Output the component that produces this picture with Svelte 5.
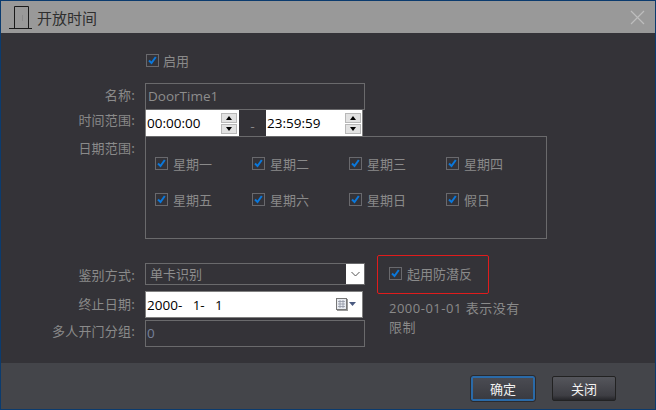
<script>
  const days = ['星期一','星期二','星期三','星期四','星期五','星期六','星期日','假日'];
</script>

{#snippet tick()}
  <span class="box"><svg width="11" height="11" viewBox="0 0 11 11"><path d="M2 5.500L4.500 8L8.800 2" fill="none" stroke="#0a78dc" stroke-width="2"/></svg></span>
{/snippet}

<div class="win">
  <header class="title">
    <svg class="door" width="24" height="24" viewBox="0 0 24 24">
      <path d="M0 22.500H23M5.500 22V0.500H19.500V22" fill="none" stroke="#1a1a1a" stroke-width="1"/>
      <path d="M13.500 9V15" stroke="#8a8a8a" stroke-width="1"/>
    </svg>
    <span>开放时间</span>
    <svg class="close" width="15" height="15" viewBox="0 0 15 15">
      <path d="M1 1L14 14M14 1L1 14" stroke="#bdbdbd" stroke-width="1.200"/>
    </svg>
  </header>

  <main class="body">
    <div class="row enable">
      <span class="lab"></span>
      <label class="chk solo">{@render tick()}启用</label>
    </div>

    <div class="row name">
      <span class="lab">名称:</span>
      <div class="input dark wide">DoorTime1</div>
    </div>

    <div class="row time">
      <span class="lab">时间范围:</span>
      <div class="spin first">
        <span>00:00:00</span>
        <span class="arrows"><i class="up"></i><i class="down"></i></span>
      </div>
      <span class="dash">-</span>
      <div class="spin second">
        <span>23:59:59</span>
        <span class="arrows"><i class="up"></i><i class="down"></i></span>
      </div>
    </div>

    <div class="row dates">
      <span class="lab">日期范围:</span>
      <div class="group">
        {#each days as d}
          <label class="chk">{@render tick()}{d}</label>
        {/each}
      </div>
    </div>

    <div class="lower">
      <div class="left">
        <div class="row sel">
          <span class="lab">鉴别方式:</span>
          <div class="input dark wide select">
            <span class="val">单卡识别</span>
            <span class="caret"><svg width="9" height="6" viewBox="0 0 9 6"><path d="M0.500 1L4.500 5L8.500 1" fill="none" stroke="#555" stroke-width="1"/></svg></span>
          </div>
        </div>
        <div class="row end">
          <span class="lab">终止日期:</span>
          <div class="datebox">
            <span class="dateval">2000-&nbsp;&nbsp;1-&nbsp;&nbsp;1</span>
            <svg width="21" height="13" viewBox="0 0 21 13">
              <rect x="1" y="1" width="11" height="12" fill="#9a9a9a"/>
              <rect x="0.500" y="0.500" width="10" height="11" fill="#e8ebf0" stroke="#777"/>
              <path d="M2 3.500H9M2 6H9M2 8.500H9M4 2V10M7 2V10" stroke="#8f96a3" stroke-width="0.800"/>
              <path d="M13 4H20L16.500 8Z" fill="#4a5a80"/>
            </svg>
          </div>
        </div>
        <div class="row multi">
          <span class="lab">多人开门分组:</span>
          <div class="input dark wide tall">0</div>
        </div>
      </div>
      <div class="right">
        <div class="redbox">
          <label class="chk">{@render tick()}起用防潜反</label>
        </div>
        <p class="note">2000-01-01 表示没有<br/>限制</p>
      </div>
    </div>
  </main>

  <footer class="foot">
    <button class="btn primary">确定</button>
    <button class="btn">关闭</button>
  </footer>
</div>

<style>
  :global(body) { margin: 0; background: #343338; }
  .win {
    width: 656px; height: 410px; box-sizing: border-box;
    border: 1px solid #0b3b6e;
    display: flex; flex-direction: column;
    background: #343338; overflow: hidden;
    font-family: "Noto Sans CJK SC", "Liberation Sans", sans-serif;
    font-size: 13px; color: #8a8a8a;
  }
  .title {
    height: 32px; flex: none; box-sizing: border-box; background: #999999; color: #2f2f2f;
    display: flex; align-items: center; padding: 0 10px 0 8px; font-size: 15px;
  }
  .door { margin-right: 4px; margin-top: 1px; }
  .close { margin-left: auto; }
  .body { flex: 1; padding-top: 17px; min-height: 0; }
  .row { display: flex; align-items: flex-start; }
  .lab {
    width: 134px; flex: none; text-align: right; line-height: 20px; margin-right: 10px; letter-spacing: 0.2px;
  }
  .chk { display: inline-flex; align-items: center; height: 20px; white-space: nowrap; }
  .box {
    width: 11px; height: 11px; border: 1px solid #69696d; margin-right: 5px;
    display: inline-flex; align-items: center; justify-content: center; flex: none;
  }
  .solo { margin-left: 1px; }
  .solo .box { margin-right: 4px; }
  .enable { height: 33px; box-sizing: border-box; }
  .input { box-sizing: border-box; border: 1px solid #6a6a6c; }
  .dark { background: #343338; color: #8d8d8d; }
  .wide { width: 220px; }
  .name { height: 27px; }
  .name .lab { line-height: 24px; }
  .name .input { height: 27px; line-height: 25px; padding-left: 2px; font-size: 13.5px; font-family: "Open Sans",sans-serif; }
  .time { height: 26px; }
  .time .lab { line-height: 20px; }
  .spin {
    box-sizing: border-box; height: 26px; background: #fff; color: #000;
    border-left: 1px solid #808080; display: flex; align-items: center; justify-content: space-between;
    padding: 0 2px 0 1px; font-family: "Open Sans",sans-serif; font-size: 13.5px;
  }
  .first { width: 94px; }
  .second { width: 97px; border-left: 0; border-right: 1px solid #808080; padding-right: 1px; }
  .dash { width: 27px; text-align: center; line-height: 32px; }
  .arrows { display: flex; flex-direction: column; gap: 1px; }
  .arrows i {
    width: 14px; height: 8px; background: #e2e2e2; border: 1px solid #b8b8b8; position: relative; display: block;
  }
  .arrows i::after {
    content: ""; position: absolute; left: 4px; border-left: 3px solid transparent; border-right: 3px solid transparent;
  }
  .up::after { top: 2px; border-bottom: 4px solid #000; }
  .down::after { top: 2px; border-top: 4px solid #000; }
  .dates { height: 103px; }
  .dates .lab { line-height: 24px; }
  .group {
    box-sizing: border-box; width: 402px; height: 103px; border: 1px solid #6a6a6c;
    padding: 16px 0 0 9px; display: grid; grid-template-columns: repeat(4, 97px); grid-auto-rows: 36px; align-items: start;
  }
  .lower { display: flex; padding-top: 16px; }
  .left { width: 365px; flex: none; }
  .sel { height: 28px; margin-top: 8px; }
  .sel .lab { line-height: 24px; }
  .select { height: 22px; display: flex; }
  .val { flex: 1; padding-left: 4px; line-height: 20px; }
  .caret { width: 18px; background: #fff; display: flex; align-items: center; justify-content: center; }
  .end { height: 29px; }
  .end .lab { line-height: 26px; }
  .datebox {
    box-sizing: border-box; width: 218px; height: 27px; background: #fff; border: 1px solid #808080; color: #000;
    display: flex; align-items: center; justify-content: space-between; padding: 0 5px 0 1px;
    font-family: "Open Sans",sans-serif; font-size: 13.5px;
  }
  .dateval { word-spacing: 1.700px; }
  .multi .lab { line-height: 22px; }
  .tall { height: 27px; line-height: 25px; padding-left: 1px; color: #76819a; font-family: "Open Sans",sans-serif; font-size: 13.5px; }
  .right { margin-left: 11px; }
  .redbox {
    box-sizing: border-box; width: 112px; height: 39px; border: 1px solid #e01c1c; border-radius: 2px;
    padding: 7px 0 0 11px;
  }
  .note { margin: 5px 0 0 12px; line-height: 19px; width: 150px; font-size: 13px; font-family: "Open Sans","Noto Sans CJK SC",sans-serif; letter-spacing: 0.5px; }
  .foot {
    height: 46px; flex: none; box-sizing: border-box; background: #44454a; display: flex; justify-content: flex-end; align-items: flex-start;
    padding: 13px 39px 0 0; gap: 17px;
  }
  .btn {
    width: 64px; height: 25px; box-sizing: border-box; padding: 0; font: inherit; font-size: 13px; color: #f2f2f2;
    border: 1px solid #222; border-radius: 2px;
    background: linear-gradient(#55565c, #3e3e44 80%, #26262a);
  }
  .primary { border: 2px solid #2a6aa8; background: linear-gradient(#4a4b52, #3a3b41); outline: 1px solid #2a2a2e; }
</style>
